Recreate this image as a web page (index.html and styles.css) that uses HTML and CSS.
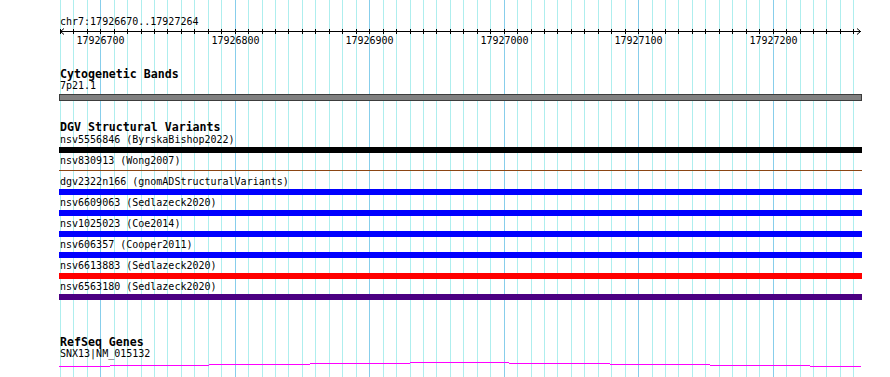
FILE: index.html
```html
<!DOCTYPE html>
<html lang="en">
  <head>
    <meta charset="UTF-8" />
    <meta name="viewport" content="width=device-width, initial-scale=1.0" />
    <title>chr7:17926670..17927264</title>
    <link rel="stylesheet" href="styles.css">
  </head>
  <body>
    <div class="browser">
      <svg class="grid" id="grid" width="890" height="377"></svg>

      <div class="ruler">
        <svg id="ruler" width="890" height="50">
          <text class="location" x="60" y="25">chr7:17926670..17927264</text>
          <path class="axis" d="M60 31.5H861M64 28.5L60.5 31.5L64 34.5M857 28.5L860.5 31.5L857 34.5" />
        </svg>
      </div>

      <div class="tracks">
        <section class="track cyto-track">
          <div class="track-title">Cytogenetic Bands</div>
          <div class="label band-label">7p21.1</div>
          <div class="band"></div>
        </section>

        <section class="track dgv-track">
          <div class="track-title">DGV Structural Variants</div>
          <div class="variant">
            <div class="label">nsv5556846 (ByrskaBishop2022)</div>
            <div class="bar black"></div>
          </div>
          <div class="variant">
            <div class="label">nsv830913 (Wong2007)</div>
            <div class="bar thin brown"></div>
          </div>
          <div class="variant">
            <div class="label">dgv2322n166 (gnomADStructuralVariants)</div>
            <div class="bar blue"></div>
          </div>
          <div class="variant">
            <div class="label">nsv6609063 (Sedlazeck2020)</div>
            <div class="bar blue"></div>
          </div>
          <div class="variant">
            <div class="label">nsv1025023 (Coe2014)</div>
            <div class="bar blue"></div>
          </div>
          <div class="variant">
            <div class="label">nsv606357 (Cooper2011)</div>
            <div class="bar blue"></div>
          </div>
          <div class="variant">
            <div class="label">nsv6613883 (Sedlazeck2020)</div>
            <div class="bar red"></div>
          </div>
          <div class="variant">
            <div class="label">nsv6563180 (Sedlazeck2020)</div>
            <div class="bar purple"></div>
          </div>
        </section>

        <section class="track gene-track">
          <div class="track-title">RefSeq Genes</div>
          <div class="label gene-label">SNX13|NM_015132</div>
          <svg class="gene" width="803" height="10">
            <path d="M0 7.5H51M51 6.5H150M150 5.5H251M251 4.5H351M351 3.5H450M450 4.5H551M551 5.5H651M651 6.5H751M751 7.5H802" />
          </svg>
        </section>
      </div>
    </div>

    <script>
      const start = 17926670;
      const end = 17927264;
      const pxPerBp = 1.345;
      const NS = 'http://www.w3.org/2000/svg';

      function addSvg(parent, tag, attrs, text) {
        const el = document.createElementNS(NS, tag);
        for (const key in attrs) el.setAttribute(key, attrs[key]);
        if (text !== undefined) el.textContent = text;
        parent.appendChild(el);
      }

      const grid = document.getElementById('grid');
      const ruler = document.getElementById('ruler');

      for (let bp = start; bp <= end; bp += 10) {
        const x = Math.floor(60.3 + (bp - start) * pxPerBp) + 0.5;
        const major = bp % 100 === 0;
        addSvg(grid, 'line', { x1: x, x2: x, y1: 0, y2: 377, class: major ? 'major' : 'minor' });
        addSvg(ruler, 'line', { x1: x, x2: x, y1: 29, y2: 34, class: 'tick' });
        if (major) {
          addSvg(ruler, 'text', { x: x, y: 44, 'text-anchor': 'middle', class: 'tick-label' }, bp);
        }
      }
    </script>
  </body>
</html>
```

FILE: styles.css
```css
body {
  margin: 0;
  background-color: #fff;
  color: #000;
  font-family: 'DejaVu Sans Mono', 'Liberation Mono', monospace;
}
.browser {
  position: relative;
  width: 890px;
  height: 377px;
  overflow: hidden;
}
.grid {
  position: absolute;
  left: 0;
  top: 0;
}
.grid line {
  stroke-width: 1;
}
.grid .minor {
  stroke: #aeeeee;
}
.grid .major {
  stroke: #87ceeb;
}
.ruler,
.tracks {
  position: relative;
}
.ruler svg {
  display: block;
}
.location,
.tick-label {
  font-family: 'DejaVu Sans Mono', 'Liberation Mono', monospace;
  font-size: 10px;
  fill: #000;
}
.axis,
.tick {
  stroke: #000;
  stroke-width: 1;
  fill: none;
}
.tracks {
  margin-left: 60px;
  width: 801px;
}
.track-title {
  font-weight: bold;
  font-size: 11.6px;
  line-height: 12px;
  height: 12px;
  white-space: nowrap;
}
.label {
  font-size: 10px;
  line-height: 10px;
  height: 10px;
  white-space: nowrap;
}
.cyto-track {
  padding-top: 18px;
}
.band-label {
  margin-top: 1px;
}
.band {
  margin: 3px 0 0 -1px;
  width: 801px;
  height: 5px;
  background-color: #808080;
  border: 1px solid #3c3c3c;
}
.dgv-track {
  margin-top: 20px;
}
.variant {
  padding-top: 2px;
  padding-bottom: 1px;
}
.bar {
  margin: 2px 0 0 -1px;
  width: 803px;
  height: 6px;
}
.bar.thin {
  height: 1px;
  margin-top: 4px;
  margin-bottom: 3px;
}
.black {
  background-color: #000;
}
.brown {
  background-color: #8b4513;
}
.blue {
  background-color: #0000ff;
}
.red {
  background-color: #ff0000;
}
.purple {
  background-color: #4b0082;
}
.gene-track {
  margin-top: 35px;
}
.gene-label {
  margin-top: 1px;
}
.gene {
  display: block;
  margin-left: -1px;
}
.gene path {
  stroke: #ff00ff;
  stroke-width: 1;
  fill: none;
}
```
